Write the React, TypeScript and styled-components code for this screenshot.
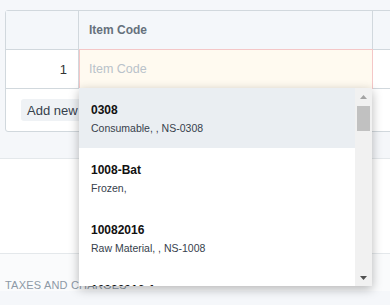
import styled, { createGlobalStyle } from 'styled-components';

const GlobalStyle = createGlobalStyle`
  html, body {
    margin: 0;
    padding: 0;
    width: 390px;
    height: 305px;
    overflow: hidden;
    background: #f5f7fa;
    font-family: 'Liberation Sans', Arial, sans-serif;
  }
`;

interface IItem {
  code: string;
  details: string;
}

const items: IItem[] = [
  { code: '0308', details: 'Consumable, , NS-0308' },
  { code: '1008-Bat', details: 'Frozen,' },
  { code: '10082016', details: 'Raw Material, , NS-1008' },
  { code: '10082016-1', details: 'Raw Material, , NS-1008' },
];

const App = () => {
  return (
    <Page>
      <GlobalStyle />
      <GridWrap>
        <Grid>
          <HeaderRow>
            <IdxCell />
            <HeadCell>Item Code</HeadCell>
            <HeadCell />
          </HeaderRow>
          <Row>
            <IdxCell>1</IdxCell>
            <EditCell>
              <Placeholder>Item Code</Placeholder>
              <Dropdown>
                <List>
                  {items.map((item, i) => (
                    <Option key={item.code} active={i === 0}>
                      <OptionTitle>{item.code}</OptionTitle>
                      <OptionText>{item.details}</OptionText>
                    </Option>
                  ))}
                </List>
                <Scrollbar>
                  <Arrow>
                    <svg width='7' height='4' viewBox='0 0 7 4'>
                      <path d='M0 4 L3.5 0 L7 4 Z' fill='#a3a3a3' />
                    </svg>
                  </Arrow>
                  <Thumb />
                  <Track />
                  <Arrow>
                    <svg width='7' height='4' viewBox='0 0 7 4'>
                      <path d='M0 0 L3.5 4 L7 0 Z' fill='#505050' />
                    </svg>
                  </Arrow>
                </Scrollbar>
              </Dropdown>
            </EditCell>
            <BlankCell />
          </Row>
          <Footer>
            <AddButton>Add new row</AddButton>
          </Footer>
        </Grid>
      </GridWrap>
      <WhiteSection />
      <TaxSection>
        <SectionLabel>TAXES AND CHARGES</SectionLabel>
      </TaxSection>
    </Page>
  );
};

const Page = styled.div`
  width: 390px;
  height: 305px;
  overflow: hidden;
  background: #f5f7fa;
`;

const GridWrap = styled.div`
  padding: 10px 0 26px 5px;
`;

const Grid = styled.div`
  width: 520px;
  border: 1px solid #d1d8dd;
  border-radius: 3px;
  background: #fff;
`;

const HeaderRow = styled.div`
  display: grid;
  grid-template-columns: 73px 294px 1fr;
  height: 38px;
  background: #f4f7fa;
  border-bottom: 1px solid #d1d8dd;
`;

const Row = styled.div`
  display: grid;
  grid-template-columns: 73px 294px 1fr;
  height: 38px;
  border-bottom: 1px solid #d1d8dd;
`;

const IdxCell = styled.div`
  border-right: 1px solid #d1d8dd;
  display: flex;
  align-items: center;
  justify-content: flex-end;
  padding-right: 11px;
  font-size: 13px;
  color: #333;
`;

const HeadCell = styled.div`
  border-right: 1px solid #d1d8dd;
  display: flex;
  align-items: center;
  padding-left: 10px;
  font-size: 12px;
  font-weight: bold;
  color: #66717c;
`;

const EditCell = styled.div`
  position: relative;
  margin: -1px 0 -1px 0;
  border: 1px solid #f4c7c7;
  background: #fffaf0;
  display: flex;
  align-items: center;
  padding-left: 9px;
`;

const BlankCell = styled.div`
  background: #fff;
`;

const Placeholder = styled.span`
  font-size: 12.5px;
  color: #b9c2ca;
`;

const Dropdown = styled.div`
  position: absolute;
  top: 38px;
  left: -1px;
  width: 293px;
  height: 198px;
  display: flex;
  background: #fff;
  overflow: hidden;
  z-index: 10;
  box-shadow: 0 3px 10px rgba(0, 0, 0, 0.28);
`;

const List = styled.div`
  flex: 1;
  overflow: hidden;
`;

const Option = styled.div<{ active?: boolean }>`
  height: 60px;
  box-sizing: border-box;
  padding: 13px 12px 11px;
  background: ${(p) => (p.active ? '#eaeef2' : '#fff')};
`;

const OptionTitle = styled.div`
  font-size: 12px;
  line-height: 19px;
  font-weight: bold;
  color: #111;
`;

const OptionText = styled.div`
  font-size: 10.5px;
  line-height: 17px;
  color: #36414c;
`;

const Scrollbar = styled.div`
  width: 17px;
  background: #f1f1f1;
  display: flex;
  flex-direction: column;
  align-items: center;
`;

const Arrow = styled.div`
  height: 17px;
  width: 17px;
  display: flex;
  align-items: center;
  justify-content: center;
`;

const Thumb = styled.div`
  width: 13px;
  height: 25px;
  margin-top: 1px;
  background: #c1c1c1;
`;

const Track = styled.div`
  flex: 1;
`;

const Footer = styled.div`
  height: 42px;
  display: flex;
  align-items: center;
  padding-left: 15px;
`;

const AddButton = styled.button`
  height: 22px;
  padding: 0 6px;
  border: none;
  border-radius: 3px;
  background: #eff2f5;
  font-family: 'Liberation Sans', Arial, sans-serif;
  font-size: 13px;
  color: #36414c;
`;

const WhiteSection = styled.div`
  height: 94px;
  background: #fff;
  border-top: 1px solid #e4e8eb;
  border-bottom: 1px solid #e4e8eb;
`;

const TaxSection = styled.div`
  background: #fafbfc;
  padding: 25px 0 0 5px;
`;

const SectionLabel = styled.div`
  font-size: 11px;
  color: #8d99a6;
  letter-spacing: 0.2px;
`;

export default App;
